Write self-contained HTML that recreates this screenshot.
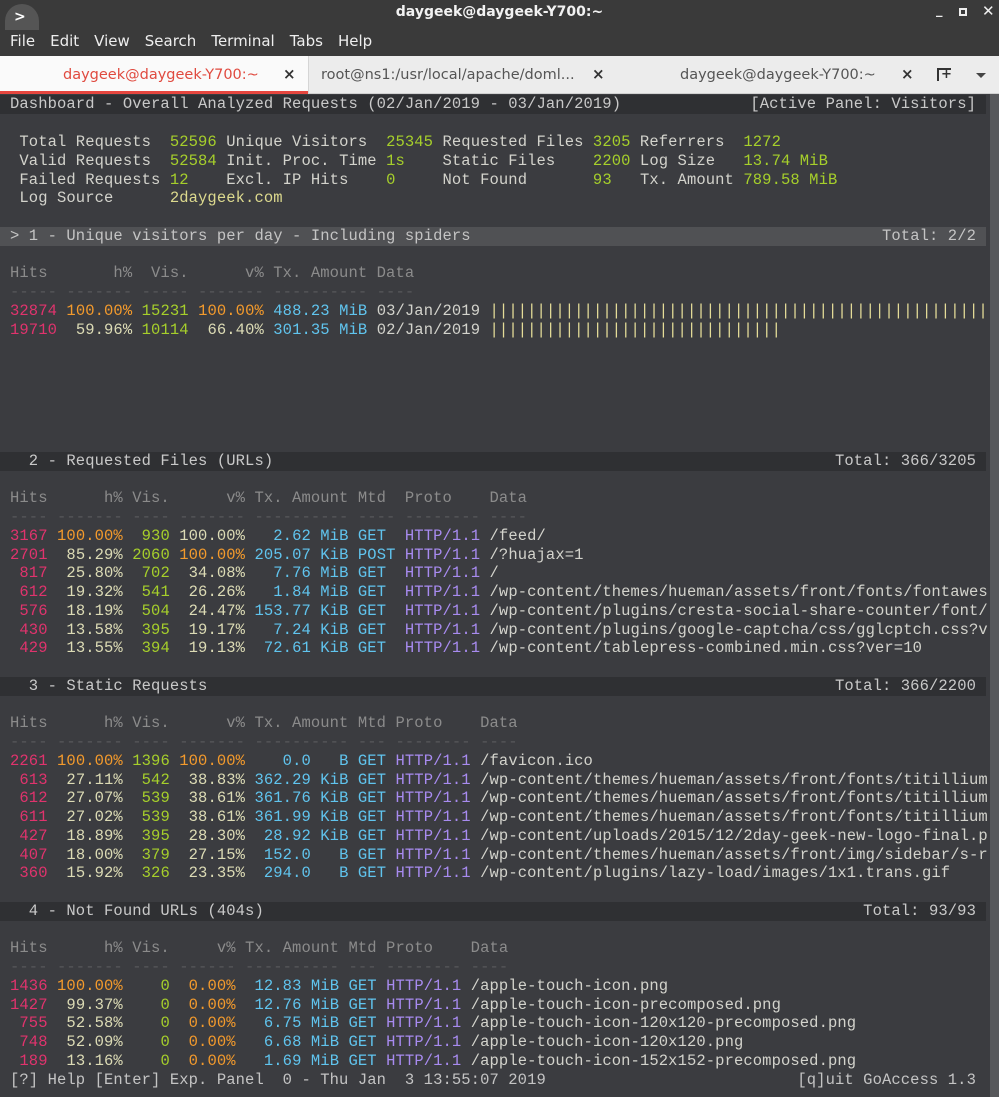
<!DOCTYPE html>
<html><head><meta charset="utf-8"><style>
*{margin:0;padding:0;box-sizing:border-box}
body{width:999px;height:1097px;overflow:hidden;background:#3b3c40;font-family:"DejaVu Sans","Liberation Sans",sans-serif;position:relative}
#title{position:absolute;left:0;top:0;width:999px;height:56px;background:#3a3a3a}
#title .t{position:absolute;top:4px;left:0;width:999px;text-align:center;color:#f2f2f2;font-weight:bold;font-size:14px}
#menu{position:absolute;top:32px;left:10px;color:#eee;font-size:15px;word-spacing:0}
#menu span{margin-right:15px}
#tabs{position:absolute;top:56px;left:0;width:999px;height:38px;background:#ececec;border-bottom:1px solid #d0d0d0}
.tab{position:absolute;top:0;height:38px;font-size:14.5px;line-height:38px;color:#555}
.x{position:absolute;top:0;font-size:15px;line-height:37px;color:#333;font-weight:bold}
#term{position:absolute;top:94px;left:0;width:999px;height:1003px;background:#3b3c40}
#sb{position:absolute;top:94px;left:990px;width:9px;height:1003px;background:#57585b}
.r{position:absolute;left:0;width:986px;height:19px;font-family:"Liberation Mono",monospace;font-size:15.5px;letter-spacing:0.1px;line-height:19px;white-space:pre;color:#d3d3cc;padding-left:10px;margin-top:1px}
.h{background:#2f3033;color:#c9c9c9}
.sel{background:#505154;color:#c4c4c4}
.rt{position:absolute;right:10px;top:0}
.g{color:#8b8b8b}.d{color:#58595b}
.p{color:#e0336d}.o{color:#f39a2c}.gr{color:#a6cf2b}.b{color:#dcdbb5}.c{color:#60c4ee}.pu{color:#a88bf0}.y{color:#dcd98e}
.bar{color:#e4dc98}
</style></head><body>
<div id="title">
<div style="position:absolute;left:5px;top:4px;width:34px;height:26px;border-radius:17px 17px 0 0;background:#555"></div>
<div style="position:absolute;left:14px;top:9px;color:#fff;font-size:14px;font-weight:bold">&gt;</div>
<div class="t">daygeek@daygeek-Y700:~</div>
<div style="position:absolute;left:936px;top:3px;color:#eee;font-size:13px;font-weight:bold">_</div>
<div style="position:absolute;left:959px;top:8px;width:8px;height:8px;border:2px solid #eee"></div>
<div style="position:absolute;left:982px;top:2px;color:#eee;font-size:15px;font-weight:bold">✕</div>
<div id="menu"><span>File</span><span>Edit</span><span>View</span><span>Search</span><span>Terminal</span><span>Tabs</span><span>Help</span></div>
</div>
<div id="tabs">
<div style="position:absolute;left:0;top:0;width:308px;height:38px;background:#fafafa;border-bottom:3px solid #e5463f"></div>
<div class="tab" style="left:63px;color:#e04a3f">daygeek@daygeek-Y700:~</div>
<div class="x" style="left:283px">×</div>
<div style="position:absolute;left:308px;top:0;width:1px;height:38px;background:#d5d5d5"></div>
<div class="tab" style="left:321px">root@ns1:/usr/local/apache/doml...</div>
<div class="x" style="left:592px">×</div>
<div class="tab" style="left:680px">daygeek@daygeek-Y700:~</div>
<div class="x" style="left:901px">×</div>
<div style="position:absolute;left:937px;top:12px;width:14px;height:13px;border-left:2px solid #333;border-top:2px solid #333;color:#333;font-size:13px;line-height:10px;padding-left:2px;font-weight:bold">+</div>
<div style="position:absolute;left:976px;top:17px;width:0;height:0;border-left:5px solid transparent;border-right:5px solid transparent;border-top:5px solid #444"></div>
</div>
<div id="term"></div>
<div id="sb"></div>

<div class="r h" style="top:94.6px;margin-top:0">Dashboard - Overall Analyzed Requests (02/Jan/2019 - 03/Jan/2019)<span class="rt">[Active Panel: Visitors]</span></div>
<div class="r" style="top:132.1px"> Total Requests  <span class="gr">52596</span> Unique Visitors  <span class="gr">25345</span> Requested Files <span class="gr">3205</span> Referrers  <span class="gr">1272</span></div>
<div class="r" style="top:150.85px"> Valid Requests  <span class="gr">52584</span> Init. Proc. Time <span class="gr">1s</span>    Static Files    <span class="gr">2200</span> Log Size   <span class="gr">13.74 MiB</span></div>
<div class="r" style="top:169.6px"> Failed Requests <span class="gr">12</span>    Excl. IP Hits    <span class="gr">0</span>     Not Found       <span class="gr">93</span>   Tx. Amount <span class="gr">789.58 MiB</span></div>
<div class="r" style="top:188.35px"> Log Source      <span class="y">2daygeek.com</span></div>

<div class="r sel" style="top:225.85px">&gt; 1 - Unique visitors per day - Including spiders<span class="rt">Total: 2/2</span></div>
<div class="r g" style="top:263.35px">Hits       h%  Vis.      v% Tx. Amount Data</div>
<div class="r d" style="top:282.1px">----- ------- ----- ------- ---------- ----</div>
<div class="r" style="top:300.85px"><span class="p">32874</span> <span class="o">100.00%</span> <span class="gr">15231</span> <span class="o">100.00%</span> <span class="c">488.23 MiB</span> 03/Jan/2019 <span class="bar">|||||||||||||||||||||||||||||||||||||||||||||||||||||</span></div>
<div class="r" style="top:319.6px"><span class="p">19710</span> <span class="b"> 59.96%</span> <span class="gr">10114</span> <span class="b"> 66.40%</span> <span class="c">301.35 MiB</span> 02/Jan/2019 <span class="bar">|||||||||||||||||||||||||||||||</span></div>

<div class="r h" style="top:450.85px">  2 - Requested Files (URLs)<span class="rt">Total: 366/3205</span></div>
<div class="r g" style="top:488.35px">Hits      h% Vis.      v% Tx. Amount Mtd  Proto    Data</div>
<div class="r d" style="top:507.1px">---- ------- ---- ------- ---------- ---- -------- ----</div>
<div class="r" style="top:525.85px"><span class="p">3167</span> <span class="o">100.00%</span> <span class="gr"> 930</span> <span class="b">100.00%</span> <span class="c">  2.62 MiB GET </span> <span class="pu">HTTP/1.1</span> /feed/</div>
<div class="r" style="top:544.6px"><span class="p">2701</span> <span class="b"> 85.29%</span> <span class="gr">2060</span> <span class="o">100.00%</span> <span class="c">205.07 KiB POST</span> <span class="pu">HTTP/1.1</span> /?huajax=1</div>
<div class="r" style="top:563.35px"><span class="p"> 817</span> <span class="b"> 25.80%</span> <span class="gr"> 702</span> <span class="b"> 34.08%</span> <span class="c">  7.76 MiB GET </span> <span class="pu">HTTP/1.1</span> /</div>
<div class="r" style="top:582.1px"><span class="p"> 612</span> <span class="b"> 19.32%</span> <span class="gr"> 541</span> <span class="b"> 26.26%</span> <span class="c">  1.84 MiB GET </span> <span class="pu">HTTP/1.1</span> /wp-content/themes/hueman/assets/front/fonts/fontawes</div>
<div class="r" style="top:600.85px"><span class="p"> 576</span> <span class="b"> 18.19%</span> <span class="gr"> 504</span> <span class="b"> 24.47%</span> <span class="c">153.77 KiB GET </span> <span class="pu">HTTP/1.1</span> /wp-content/plugins/cresta-social-share-counter/font/</div>
<div class="r" style="top:619.6px"><span class="p"> 430</span> <span class="b"> 13.58%</span> <span class="gr"> 395</span> <span class="b"> 19.17%</span> <span class="c">  7.24 KiB GET </span> <span class="pu">HTTP/1.1</span> /wp-content/plugins/google-captcha/css/gglcptch.css?v</div>
<div class="r" style="top:638.35px"><span class="p"> 429</span> <span class="b"> 13.55%</span> <span class="gr"> 394</span> <span class="b"> 19.13%</span> <span class="c"> 72.61 KiB GET </span> <span class="pu">HTTP/1.1</span> /wp-content/tablepress-combined.min.css?ver=10</div>

<div class="r h" style="top:675.85px">  3 - Static Requests<span class="rt">Total: 366/2200</span></div>
<div class="r g" style="top:713.35px">Hits      h% Vis.      v% Tx. Amount Mtd Proto    Data</div>
<div class="r d" style="top:732.1px">---- ------- ---- ------- ---------- --- -------- ----</div>
<div class="r" style="top:750.85px"><span class="p">2261</span> <span class="o">100.00%</span> <span class="gr">1396</span> <span class="o">100.00%</span> <span class="c">   0.0   B GET</span> <span class="pu">HTTP/1.1</span> /favicon.ico</div>
<div class="r" style="top:769.6px"><span class="p"> 613</span> <span class="b"> 27.11%</span> <span class="gr"> 542</span> <span class="b"> 38.83%</span> <span class="c">362.29 KiB GET</span> <span class="pu">HTTP/1.1</span> /wp-content/themes/hueman/assets/front/fonts/titillium</div>
<div class="r" style="top:788.35px"><span class="p"> 612</span> <span class="b"> 27.07%</span> <span class="gr"> 539</span> <span class="b"> 38.61%</span> <span class="c">361.76 KiB GET</span> <span class="pu">HTTP/1.1</span> /wp-content/themes/hueman/assets/front/fonts/titillium</div>
<div class="r" style="top:807.1px"><span class="p"> 611</span> <span class="b"> 27.02%</span> <span class="gr"> 539</span> <span class="b"> 38.61%</span> <span class="c">361.99 KiB GET</span> <span class="pu">HTTP/1.1</span> /wp-content/themes/hueman/assets/front/fonts/titillium</div>
<div class="r" style="top:825.85px"><span class="p"> 427</span> <span class="b"> 18.89%</span> <span class="gr"> 395</span> <span class="b"> 28.30%</span> <span class="c"> 28.92 KiB GET</span> <span class="pu">HTTP/1.1</span> /wp-content/uploads/2015/12/2day-geek-new-logo-final.p</div>
<div class="r" style="top:844.6px"><span class="p"> 407</span> <span class="b"> 18.00%</span> <span class="gr"> 379</span> <span class="b"> 27.15%</span> <span class="c"> 152.0   B GET</span> <span class="pu">HTTP/1.1</span> /wp-content/themes/hueman/assets/front/img/sidebar/s-r</div>
<div class="r" style="top:863.35px"><span class="p"> 360</span> <span class="b"> 15.92%</span> <span class="gr"> 326</span> <span class="b"> 23.35%</span> <span class="c"> 294.0   B GET</span> <span class="pu">HTTP/1.1</span> /wp-content/plugins/lazy-load/images/1x1.trans.gif</div>

<div class="r h" style="top:900.85px">  4 - Not Found URLs (404s)<span class="rt">Total: 93/93</span></div>
<div class="r g" style="top:938.35px">Hits      h% Vis.     v% Tx. Amount Mtd Proto    Data</div>
<div class="r d" style="top:957.1px">---- ------- ---- ------ ---------- --- -------- ----</div>
<div class="r" style="top:975.85px"><span class="p">1436</span> <span class="o">100.00%</span> <span class="gr">   0</span> <span class="o"> 0.00%</span> <span class="c"> 12.83 MiB GET</span> <span class="pu">HTTP/1.1</span> /apple-touch-icon.png</div>
<div class="r" style="top:994.6px"><span class="p">1427</span> <span class="b"> 99.37%</span> <span class="gr">   0</span> <span class="o"> 0.00%</span> <span class="c"> 12.76 MiB GET</span> <span class="pu">HTTP/1.1</span> /apple-touch-icon-precomposed.png</div>
<div class="r" style="top:1013.35px"><span class="p"> 755</span> <span class="b"> 52.58%</span> <span class="gr">   0</span> <span class="o"> 0.00%</span> <span class="c">  6.75 MiB GET</span> <span class="pu">HTTP/1.1</span> /apple-touch-icon-120x120-precomposed.png</div>
<div class="r" style="top:1032.1px"><span class="p"> 748</span> <span class="b"> 52.09%</span> <span class="gr">   0</span> <span class="o"> 0.00%</span> <span class="c">  6.68 MiB GET</span> <span class="pu">HTTP/1.1</span> /apple-touch-icon-120x120.png</div>
<div class="r" style="top:1050.85px"><span class="p"> 189</span> <span class="b"> 13.16%</span> <span class="gr">   0</span> <span class="o"> 0.00%</span> <span class="c">  1.69 MiB GET</span> <span class="pu">HTTP/1.1</span> /apple-touch-icon-152x152-precomposed.png</div>
<div class="r" style="top:1069.6px;color:#c4c4c4">[?] Help [Enter] Exp. Panel  0 - Thu Jan  3 13:55:07 2019<span class="rt">[q]uit GoAccess 1.3</span></div>
</body></html>
